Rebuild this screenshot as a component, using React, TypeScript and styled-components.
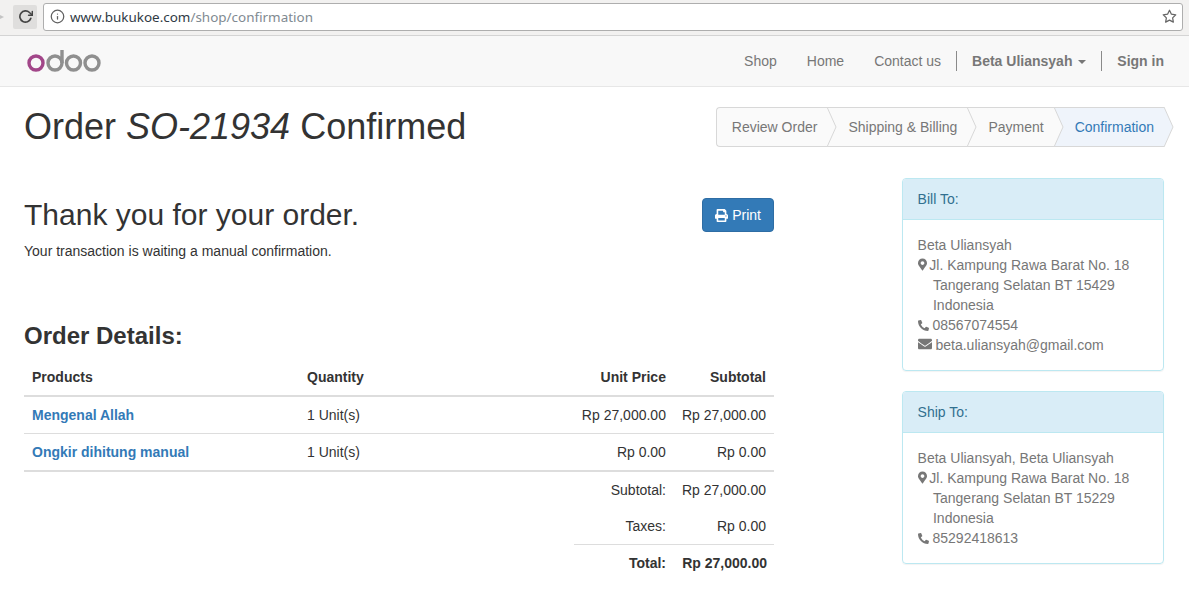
import React from 'react';
import { createGlobalStyle, styled } from 'styled-components';
import { FaEnvelope, FaMapMarkerAlt, FaPhoneAlt, FaPrint } from 'react-icons/fa';
import { FiInfo, FiRotateCw, FiStar } from 'react-icons/fi';

const GlobalStyle = createGlobalStyle`
  html, body {
    margin: 0;
    padding: 0;
    background: #fff;
  }
  body {
    height: 592px;
    overflow: hidden;
    font-family: 'Liberation Sans', Arial, sans-serif;
    font-size: 14px;
    line-height: 20px;
    color: #333;
  }
  * {
    box-sizing: border-box;
  }
`;

const steps = [
  { label: 'Review Order', first: true },
  { label: 'Shipping & Billing' },
  { label: 'Payment' },
  { label: 'Confirmation', active: true },
];

const OdooLogo = () => (
  <svg width="76" height="26" viewBox="0 0 76 26" fill="none" strokeWidth="3.4">
    <circle cx="10" cy="15" r="7" stroke="#a24689" />
    <circle cx="29" cy="15" r="7" stroke="#8f8f8f" />
    <path d="M36 15V2" stroke="#8f8f8f" />
    <circle cx="47.5" cy="15" r="7" stroke="#8f8f8f" />
    <circle cx="66" cy="15" r="7" stroke="#8f8f8f" />
  </svg>
);

const StepArrow = ({ active }: { active?: boolean }) => (
  <ArrowSvg width="10" height="40" viewBox="0 0 10 40">
    <polygon points="0,0 9,20 0,40" fill={active ? '#eff4fb' : '#fafafa'} />
    <polyline points="0,0 9,20 0,40" fill="none" stroke="#d8d8d8" />
  </ArrowSvg>
);

const App = () => {
  return (
    <>
      <GlobalStyle />
      <BrowserBar>
        <BackArrow />
        <ReloadButton>
          <FiRotateCw size={15} strokeWidth={2.6} />
        </ReloadButton>
        <UrlBox>
          <FiInfo size={15} color="#5f5f5f" />
          <UrlText>
            www.bukukoe.com<UrlPath>/shop/confirmation</UrlPath>
          </UrlText>
          <FiStar size={15} color="#666" strokeWidth={2} />
        </UrlBox>
      </BrowserBar>

      <Navbar>
        <OdooLogo />
        <NavList>
          <NavLink>Shop</NavLink>
          <NavLink>Home</NavLink>
          <NavLink>Contact us</NavLink>
          <NavDivider />
          <NavLink $bold>
            Beta Uliansyah <Caret />
          </NavLink>
          <NavDivider />
          <NavLink $bold>Sign in</NavLink>
        </NavList>
      </Navbar>

      <TitleRow>
        <PageTitle>
          Order <em>SO-21934</em> Confirmed
        </PageTitle>
        <Wizard>
          {steps.map((step) => (
            <Step key={step.label} $first={step.first} $active={step.active}>
              {step.label}
              <StepArrow active={step.active} />
            </Step>
          ))}
        </Wizard>
      </TitleRow>

      <Content>
        <MainColumn>
          <ThanksRow>
            <div>
              <ThanksTitle>Thank you for your order.</ThanksTitle>
              <ThanksText>Your transaction is waiting a manual confirmation.</ThanksText>
            </div>
            <PrintButton>
              <FaPrint size={13} /> Print
            </PrintButton>
          </ThanksRow>

          <DetailsTitle>Order Details:</DetailsTitle>
          <OrderTable>
            <thead>
              <tr>
                <HeadCell $width={275}>Products</HeadCell>
                <HeadCell>Quantity</HeadCell>
                <HeadCell $right>Unit Price</HeadCell>
                <HeadCell $right $width={100}>Subtotal</HeadCell>
              </tr>
            </thead>
            <tbody>
              <tr>
                <BodyCell><ProductLink>Mengenal Allah</ProductLink></BodyCell>
                <BodyCell>1 Unit(s)</BodyCell>
                <BodyCell $right>Rp 27,000.00</BodyCell>
                <BodyCell $right>Rp 27,000.00</BodyCell>
              </tr>
              <tr>
                <BodyCell $last><ProductLink>Ongkir dihitung manual</ProductLink></BodyCell>
                <BodyCell $last>1 Unit(s)</BodyCell>
                <BodyCell $last $right>Rp 0.00</BodyCell>
                <BodyCell $last $right>Rp 0.00</BodyCell>
              </tr>
            </tbody>
          </OrderTable>

          <Totals>
            <TotalRow>
              <span>Subtotal:</span>
              <span>Rp 27,000.00</span>
            </TotalRow>
            <TotalRow>
              <span>Taxes:</span>
              <span>Rp 0.00</span>
            </TotalRow>
            <TotalRow $grand>
              <span>Total:</span>
              <span>Rp 27,000.00</span>
            </TotalRow>
          </Totals>
        </MainColumn>

        <SideColumn>
          <Panel>
            <PanelHeading>Bill To:</PanelHeading>
            <PanelBody>
              <div>Beta Uliansyah</div>
              <div><MarkerIcon /> Jl. Kampung Rawa Barat No. 18</div>
              <Indented>Tangerang Selatan BT 15429</Indented>
              <Indented>Indonesia</Indented>
              <div><FaPhoneAlt size={11} /> 08567074554</div>
              <div><FaEnvelope size={14} /> beta.uliansyah@gmail.com</div>
            </PanelBody>
          </Panel>
          <Panel>
            <PanelHeading>Ship To:</PanelHeading>
            <PanelBody>
              <div>Beta Uliansyah, Beta Uliansyah</div>
              <div><MarkerIcon /> Jl. Kampung Rawa Barat No. 18</div>
              <Indented>Tangerang Selatan BT 15229</Indented>
              <Indented>Indonesia</Indented>
              <div><FaPhoneAlt size={11} /> 85292418613</div>
            </PanelBody>
          </Panel>
        </SideColumn>
      </Content>
    </>
  );
};

export default App;

const BrowserBar = styled.div`
  position: relative;
  display: flex;
  align-items: center;
  height: 36px;
  padding: 0 6px 2px 13px;
  background: #f2f1f0;
  border-bottom: 1px solid #d4d4d4;
`;

const BackArrow = styled.div`
  position: absolute;
  left: -4px;
  top: 13px;
  width: 0;
  height: 0;
  border-left: 8px solid #c4c4c4;
  border-top: 4px solid transparent;
  border-bottom: 4px solid transparent;
`;

const ReloadButton = styled.div`
  display: flex;
  align-items: center;
  justify-content: center;
  width: 24px;
  height: 24px;
  margin-right: 6px;
  background: #dfdedd;
  border-radius: 2px;
  color: #444;
`;

const UrlBox = styled.div`
  display: flex;
  align-items: center;
  flex: 1;
  height: 28px;
  padding: 0 5px 0 6px;
  background: #fff;
  border: 1px solid #aeaeae;
  border-radius: 3px;
`;

const UrlText = styled.div`
  flex: 1;
  margin-left: 5px;
  font-family: 'Noto Sans', sans-serif;
  font-size: 13.45px;
  color: #2f3a44;
`;

const UrlPath = styled.span`
  color: #7f8a91;
`;

const Navbar = styled.nav`
  display: flex;
  align-items: center;
  justify-content: space-between;
  height: 51px;
  padding: 0 10px 0 26px;
  background: #f8f8f8;
  border-bottom: 1px solid #e7e7e7;
`;

const NavList = styled.div`
  display: flex;
  align-items: center;
`;

const NavLink = styled.a<{ $bold?: boolean }>`
  display: block;
  padding: 0 15px;
  color: #777;
  font-weight: ${(p) => (p.$bold ? 700 : 400)};
`;

const NavDivider = styled.div`
  width: 1px;
  height: 20px;
  background: #8a8a8a;
`;

const Caret = styled.span`
  display: inline-block;
  margin-left: 2px;
  vertical-align: middle;
  border-top: 4px solid #777;
  border-left: 4px solid transparent;
  border-right: 4px solid transparent;
`;

const TitleRow = styled.div`
  display: flex;
  align-items: flex-start;
  justify-content: space-between;
  padding: 20px 25px 0 24px;
`;

const PageTitle = styled.h1`
  margin: 0;
  font-size: 36px;
  line-height: 40px;
  font-weight: 500;
`;

const Wizard = styled.div`
  display: flex;
  height: 40px;
`;

const Step = styled.div<{ $first?: boolean; $active?: boolean }>`
  position: relative;
  display: flex;
  align-items: center;
  height: 40px;
  padding: 0 10px 0 ${(p) => (p.$first ? '15px' : '21px')};
  color: ${(p) => (p.$active ? '#337ab7' : '#777')};
  background: ${(p) => (p.$active ? '#eff4fb' : '#fafafa')};
  border-top: 1px solid #d8d8d8;
  border-bottom: 1px solid #d8d8d8;
  border-left: ${(p) => (p.$first ? '1px solid #d8d8d8' : 'none')};
  border-radius: ${(p) => (p.$first ? '4px 0 0 4px' : '0')};
`;

const ArrowSvg = styled.svg`
  position: absolute;
  left: 100%;
  top: -1px;
  z-index: 1;
`;

const Content = styled.div`
  display: flex;
  justify-content: space-between;
  padding: 31px 25px 0 24px;
`;

const MainColumn = styled.div`
  width: 750px;
`;

const ThanksRow = styled.div`
  display: flex;
  align-items: flex-start;
  justify-content: space-between;
  padding-top: 20px;
  height: 145px;
`;

const ThanksTitle = styled.h2`
  margin: 0 0 10px;
  font-size: 30px;
  line-height: 33px;
  font-weight: 500;
`;

const ThanksText = styled.p`
  margin: 0;
`;

const PrintButton = styled.button`
  display: flex;
  align-items: center;
  gap: 4px;
  height: 34px;
  padding: 0 12px;
  color: #fff;
  background: #337ab7;
  border: 1px solid #2e6da4;
  border-radius: 4px;
  font: inherit;
`;

const DetailsTitle = styled.h3`
  margin: 0 0 8px;
  font-size: 24px;
  line-height: 26px;
  font-weight: 700;
`;

const OrderTable = styled.table`
  width: 100%;
  border-collapse: collapse;
`;

const HeadCell = styled.th<{ $right?: boolean; $width?: number }>`
  height: 39px;
  padding: 8px;
  vertical-align: bottom;
  text-align: ${(p) => (p.$right ? 'right' : 'left')};
  width: ${(p) => (p.$width ? `${p.$width}px` : 'auto')};
  font-weight: 700;
  border-bottom: 2px solid #ddd;
`;

const BodyCell = styled.td<{ $right?: boolean; $last?: boolean }>`
  height: 37px;
  padding: 8px;
  white-space: nowrap;
  text-align: ${(p) => (p.$right ? 'right' : 'left')};
  border-bottom: ${(p) => (p.$last ? '2px solid #ddd' : '1px solid #ddd')};
`;

const ProductLink = styled.a`
  color: #337ab7;
  font-weight: 700;
`;

const Totals = styled.div`
  display: flex;
  flex-direction: column;
  width: 200px;
  margin-left: auto;
`;

const TotalRow = styled.div<{ $grand?: boolean }>`
  display: flex;
  height: ${(p) => (p.$grand ? '37px' : '36px')};
  padding: 8px 0;
  font-weight: ${(p) => (p.$grand ? 700 : 400)};
  border-top: ${(p) => (p.$grand ? '1px solid #ddd' : 'none')};

  > span:first-child {
    flex: 0 0 92px;
    text-align: right;
  }
  > span:last-child {
    flex: 0 0 ${(p) => (p.$grand ? '101px' : '100px')};
    text-align: right;
    white-space: nowrap;
  }
`;

const SideColumn = styled.aside`
  display: flex;
  flex-direction: column;
  gap: 20px;
  width: 262px;
`;

const Panel = styled.section`
  border: 1px solid #bce8f1;
  border-radius: 4px;
  box-shadow: 0 1px 1px rgba(0, 0, 0, 0.05);
  overflow: hidden;
`;

const PanelHeading = styled.div`
  height: 41px;
  padding: 10px 15px 10px 14.6px;
  color: #31708f;
  background: #d9edf7;
  border-bottom: 1px solid #bce8f1;
`;

const PanelBody = styled.div`
  padding: 15px 15px 15px 14.6px;
  color: #777;

  svg {
    vertical-align: -1px;
  }
`;

const MarkerIcon = styled(FaMapMarkerAlt)`
  width: 9px;
  height: 13px;
  margin-right: -1.2px;
`;

const Indented = styled.div`
  padding-left: 15.4px;
`;
